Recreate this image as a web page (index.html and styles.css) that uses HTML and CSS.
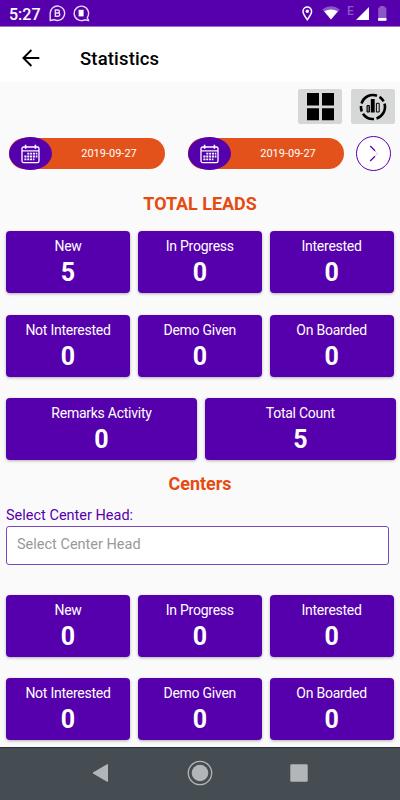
FILE: index.html
```html
<!DOCTYPE html>
<html lang="en">
<head>
  <meta charset="UTF-8">
  <meta name="viewport" content="width=device-width, initial-scale=1.0">
  <title>Statistics</title>
  <link rel="stylesheet" href="styles.css">
</head>
<body>
  <!-- Shared calendar icon -->
  <svg class="defs" width="0" height="0">
    <symbol id="calendar" viewBox="0 0 19 20">
      <g fill="none" stroke="#fff">
        <rect x="1" y="3" width="17" height="15.6" rx="1.6" stroke-width="1.3" />
        <path d="M1 6.9h17" stroke-width="1.2" />
        <path d="M4.6 .8v4M14.4 .8v4" stroke-width="1.6" />
        <path d="M6.3 9.6h10M3.4 12.5h13M3.4 15.4h10" stroke-width="1.9" stroke-dasharray="2 .85" />
      </g>
    </symbol>
  </svg>

  <div class="screen">
    <!-- Status Bar -->
    <div class="status-bar">
      <span class="clock">5:27</span>
      <svg class="chat-icon" width="17" height="17" viewBox="0 0 17 17">
        <path d="M1.2 15.5V8.2a7.2 7.2 0 1 1 4 6.5z" fill="none" stroke="#e6dcf4" stroke-width="1.4" stroke-linejoin="round" />
        <path d="M6.3 5h2.6a1.5 1.5 0 0 1 0 3H6.3zM6.3 8h2.9a1.6 1.6 0 0 1 0 3.2H6.3z" fill="none" stroke="#e6dcf4" stroke-width="1.4" />
      </svg>
      <svg class="chat-icon second" width="17" height="17" viewBox="0 0 17 17">
        <path d="M15.6 15.6L14.2 12.6a7.2 7.2 0 1 0-2.6 2.2z" fill="none" stroke="#e6dcf4" stroke-width="1.4" stroke-linejoin="round" />
        <path d="M5.6 4.8h5v6.6h-5z" fill="#fff" />
      </svg>
      <div class="status-right">
        <svg class="pin" width="11" height="15" viewBox="0 0 11 15">
          <path d="M5.3 13.7C3 10.700 1 8 1 5.300a4.300 4.300 0 0 1 8.600 0C9.600 8 7.600 10.700 5.300 13.700z" fill="none" stroke="#fff" stroke-width="1.5" />
          <circle cx="5.3" cy="5.200" r="1.700" fill="#fff" />
        </svg>
        <svg class="wifi" width="18" height="14" viewBox="0 0 18 14">
          <path d="M9 13.600L.2 3.500Q9-2.800 17.800 3.500z" fill="#8e57c8" />
          <path d="M9 13.600L2.200 5.300Q9 1.600 15.800 5.300z" fill="#fff" />
        </svg>
        <span class="network">E</span>
        <svg class="signal" width="13" height="13" viewBox="0 0 13 13"><path d="M13 0v13H0z" fill="#fff" /></svg>
        <svg width="9" height="15" viewBox="0 0 9 15">
          <path d="M2 0h4.600v1.400h1.800V15H.2V1.400H2z" fill="#8e57c8" />
          <path d="M.2 12h8.200v2.200q0 .6-.6.6H.8q-.6 0-.6-.6z" fill="#fff" />
        </svg>
      </div>
    </div>

    <!-- App Bar -->
    <div class="app-bar">
      <svg width="18" height="18" viewBox="0 0 18 18">
        <path d="M17.300 9H1.600M9.400 1L1.400 9l8 8" fill="none" stroke="#000" stroke-width="1.900" />
      </svg>
      <h1 class="title">Statistics</h1>
    </div>

    <div class="content">
      <div class="view-buttons">
        <button class="view-btn">
          <svg width="27" height="28" viewBox="0 0 27 28">
            <path d="M0 0h12v12.500H0zM15 0h12v12.500H15zM0 15.300h12v12H0zM15 15.300h12v12H15z" />
          </svg>
        </button>
        <button class="view-btn">
          <svg width="28" height="28" viewBox="0 0 28 28">
            <g fill="none" stroke="#000" stroke-width="2.600">
              <path d="M2.500 10.500A12 12 0 0 1 18 2.700" />
              <path d="M20.500 3.900A12 12 0 0 1 24.600 8.400" />
              <path d="M25.500 10.700A12 12 0 0 1 17.500 25.500" />
              <path d="M15 26A12 12 0 0 1 4 20.700" />
              <path d="M2.800 18.500A12 12 0 0 1 2 13" />
            </g>
            <path d="M11.800 6h3.900v13.500h-3.900z" />
            <path d="M8 12.500h2.400v6.500H8z" fill="#777" stroke="#000" />
            <path d="M17.400 10.300h2.800V19h-2.800z" fill="none" stroke="#000" />
          </svg>
        </button>
      </div>

      <!-- Date Range -->
      <div class="date-row">
        <div class="date-pill">
          <span class="date-icon"><svg width="19" height="20"><use href="#calendar" /></svg></span>
          <span class="date-text">2019-09-27</span>
        </div>
        <div class="date-pill">
          <span class="date-icon"><svg width="19" height="20"><use href="#calendar" /></svg></span>
          <span class="date-text">2019-09-27</span>
        </div>
        <button class="go-btn">
          <svg width="10" height="17" viewBox="0 0 10 17">
            <path d="M1.200 1l4.800 4.700M1.200 16l4.800-4.700" fill="none" stroke="#5600ad" stroke-width="1.200" />
            <path d="M6.300 6.300L8.700 8.500 6.300 10.700" fill="none" stroke="#b08fd8" stroke-dasharray="1 1" />
          </svg>
        </button>
      </div>

      <!-- Total Leads -->
      <h2 class="section-title">TOTAL LEADS</h2>
      <div class="cards">
        <div class="card"><span class="label">New</span><span class="count">5</span></div>
        <div class="card"><span class="label">In Progress</span><span class="count">0</span></div>
        <div class="card"><span class="label">Interested</span><span class="count">0</span></div>
        <div class="card"><span class="label">Not Interested</span><span class="count">0</span></div>
        <div class="card"><span class="label">Demo Given</span><span class="count">0</span></div>
        <div class="card"><span class="label">On Boarded</span><span class="count">0</span></div>
      </div>
      <div class="cards wide">
        <div class="card"><span class="label">Remarks Activity</span><span class="count">0</span></div>
        <div class="card"><span class="label">Total Count</span><span class="count">5</span></div>
      </div>

      <!-- Centers -->
      <h2 class="section-title centers">Centers</h2>
      <label class="field-label" for="centerHead">Select Center Head:</label>
      <input class="field" type="text" id="centerHead" placeholder="Select Center Head">
      <div class="cards">
        <div class="card"><span class="label">New</span><span class="count">0</span></div>
        <div class="card"><span class="label">In Progress</span><span class="count">0</span></div>
        <div class="card"><span class="label">Interested</span><span class="count">0</span></div>
        <div class="card"><span class="label">Not Interested</span><span class="count">0</span></div>
        <div class="card"><span class="label">Demo Given</span><span class="count">0</span></div>
        <div class="card"><span class="label">On Boarded</span><span class="count">0</span></div>
      </div>
    </div>

    <!-- Navigation Bar -->
    <div class="nav-bar">
      <svg width="17" height="20" viewBox="0 0 17 20"><path d="M15.500 1.500v17L1 10z" fill="#b2b6b8" stroke="#b2b6b8" stroke-linejoin="round" /></svg>
      <svg width="26" height="26" viewBox="0 0 26 26">
        <circle cx="13" cy="13" r="11.700" fill="none" stroke="#b2b6b8" stroke-width="1.300" />
        <circle cx="13" cy="13" r="8.300" fill="#b2b6b8" />
      </svg>
      <svg width="18" height="18" viewBox="0 0 18 18"><rect x=".3" y=".3" width="17.400" height="17.400" rx="1.300" fill="#b2b6b8" /></svg>
    </div>
  </div>
</body>
</html>
```
FILE: styles.css
```css
* {
  box-sizing: border-box;
}

body {
  margin: 0;
  font-family: Roboto, sans-serif;
  background-color: #fafafa;
}

.defs {
  display: none;
}

.screen {
  width: 400px;
  height: 800px;
  display: flex;
  flex-direction: column;
  overflow: hidden;
}

button {
  padding: 0;
  border: none;
  display: flex;
  align-items: center;
  justify-content: center;
}

/* Status bar */
.status-bar {
  height: 27px;
  flex-shrink: 0;
  display: flex;
  align-items: center;
  padding: 0 13px 0 9px;
  background-color: #5600ad;
  border-bottom: 1px solid #9a70cc;
  color: #fff;
}

.clock {
  width: 31px;
  margin-right: 9px;
  font-size: 16px;
  font-weight: 500;
  padding-top: 2px;
}

.chat-icon.second {
  margin-left: 7px;
}

.status-right {
  margin-left: auto;
  display: flex;
  align-items: center;
}

.pin {
  margin-right: 9px;
}

.wifi {
  margin-right: 7px;
}

.network {
  width: 9px;
  font-size: 12px;
  font-weight: 500;
  line-height: 12px;
  padding-bottom: 4px;
  color: #8e57c8;
}

.signal {
  margin-right: 9px;
}

/* App bar */
.app-bar {
  height: 55px;
  flex-shrink: 0;
  display: flex;
  align-items: center;
  padding: 7px 22px 0;
  background-color: #fff;
}

.title {
  margin: 0 0 0 40px;
  padding-top: 2px;
  font-size: 18.5px;
  font-weight: 500;
  letter-spacing: 0.15px;
  color: #000;
}

.content {
  height: 665px;
  padding: 7px 6px 0;
}

.view-buttons {
  height: 35px;
  display: flex;
  justify-content: flex-end;
  gap: 9px;
  margin-right: -1px;
}

.view-btn {
  width: 44px;
  height: 35px;
  border-radius: 2px;
  background-color: #d6d7d7;
}

/* Date range */
.date-row {
  height: 35px;
  display: flex;
  align-items: center;
  margin: 12px -2px 0 3px;
}

.date-pill {
  width: 156px;
  height: 31px;
  margin-right: 23px;
  display: flex;
  align-items: center;
  border-radius: 16px;
  background-color: #e4521b;
}

.date-pill + .date-pill {
  margin-right: 12px;
}

.date-icon {
  width: 43px;
  height: 33px;
  flex-shrink: 0;
  display: flex;
  align-items: center;
  justify-content: center;
  border-radius: 50%;
  background-color: #5600ad;
}

.date-text {
  flex: 1;
  padding-left: 1px;
  text-align: center;
  font-size: 11px;
  color: #fff;
}

.go-btn {
  width: 35px;
  height: 35px;
  border: 1px solid #5600ad;
  border-radius: 50%;
  background-color: #fff;
}

.section-title {
  margin: 23px 0 17.3px;
  line-height: 20px;
  text-align: center;
  font-size: 17.9px;
  font-weight: 700;
  color: #e64a0f;
}

.section-title.centers {
  margin: 13.7px 0 13.5px;
}

/* Count cards */
.cards {
  display: grid;
  grid-template-columns: repeat(3, 124px);
  gap: 21.4px 7.8px;
}

.cards.wide {
  grid-template-columns: repeat(2, 191px);
  margin-top: 21.2px;
}

.card {
  height: 62px;
  padding-top: 6px;
  display: flex;
  flex-direction: column;
  align-items: center;
  border-radius: 4px;
  background-color: #5600ad;
  box-shadow: 0 1px 3px rgba(0, 0, 0, 0.3);
  color: #fff;
}

.label {
  font-size: 14px;
  line-height: 18px;
  letter-spacing: -0.25px;
}

.count {
  font-size: 25px;
  line-height: 36px;
  font-weight: 700;
}

/* Center head field */
.field-label {
  display: block;
  font-size: 14.5px;
  line-height: 18.6px;
  color: #5600ad;
}

.field {
  display: block;
  width: 383px;
  height: 39px;
  margin-bottom: 30.3px;
  padding: 0 10px 1px;
  border: 1px solid #7c46bd;
  border-radius: 3px;
  background-color: #fff;
  font-family: inherit;
  font-size: 14.5px;
}

.field::placeholder {
  color: #999;
}

/* Navigation bar */
.nav-bar {
  height: 53px;
  flex-shrink: 0;
  display: flex;
  align-items: center;
  justify-content: space-between;
  padding: 0 92px 2px;
  border-top: 1px solid #263238;
  background-color: #454d52;
}
```
